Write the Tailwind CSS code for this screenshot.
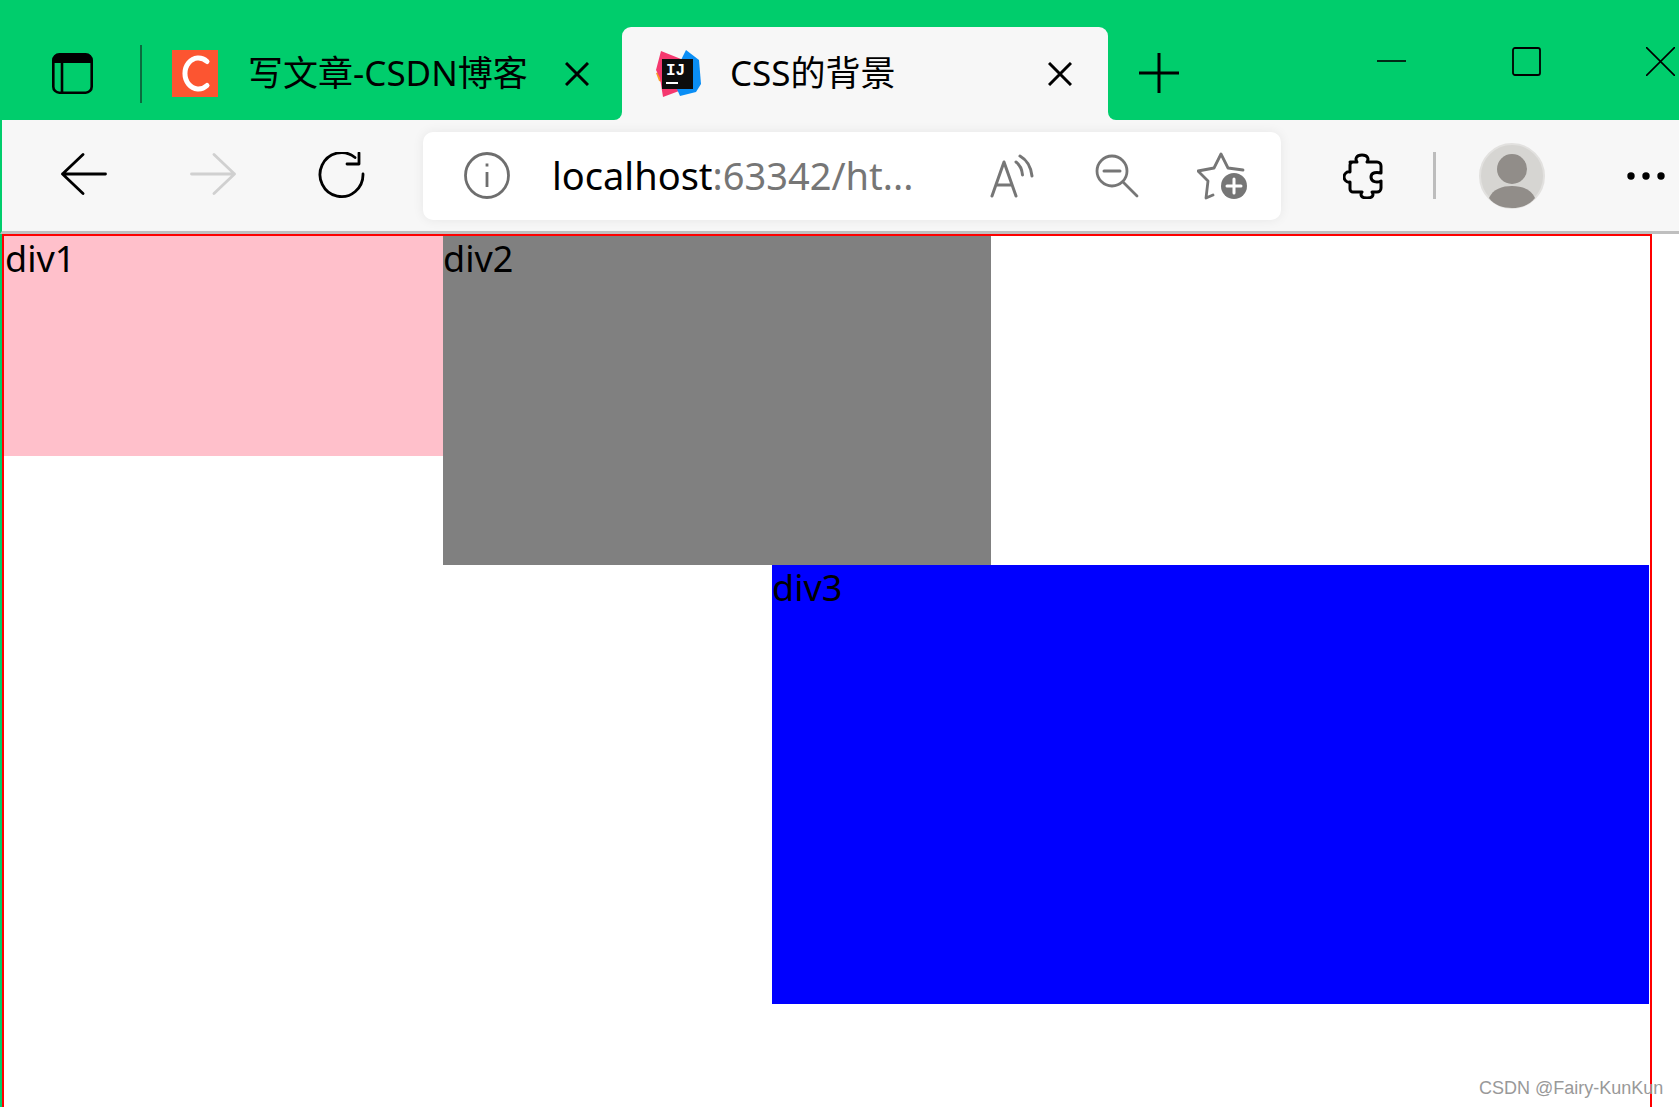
<!DOCTYPE html>
<html lang="en">
<head>
  <meta charset="UTF-8">
  <title>CSS的背景</title>
  <script src="https://cdn.jsdelivr.net/npm/@tailwindcss/browser@4"></script>
</head>
<body class="relative w-[1679px] h-[1107px] overflow-hidden bg-white text-black font-['Noto_Sans','Noto_Sans_CJK_SC',sans-serif]">

  <!-- tab strip -->
  <div class="flex items-center h-[120px] pt-[25px] bg-[#00cd6c]">
    <svg class="ml-[52px] mt-[2px] w-[41px] h-[41px]" viewBox="0 0 41 41" fill="none" stroke="#000" stroke-width="2.6">
      <rect x="1.3" y="1.3" width="38.4" height="38.4" rx="6"/>
      <path d="M1 9V7a6 6 0 0 1 6-6h27a6 6 0 0 1 6 6v3H1z" fill="#000" stroke="none"/>
      <path d="M10 10v30"/>
    </svg>
    <div class="ml-[47px] mt-[2px] w-[2px] h-[58px] bg-[#0b6b3e]"></div>
    <svg class="ml-[30px] mt-[2px] w-[46px] h-[47px]" viewBox="0 0 46 47">
      <rect width="46" height="47" fill="#fc5531"/>
      <path d="M35 11.500a13.500 15.500 0 1 0 0 24" fill="none" stroke="#fff" stroke-width="5" stroke-linecap="round"/>
    </svg>
    <div class="ml-[30px] w-[281px] text-[35px] leading-[48px] whitespace-nowrap">写文章-CSDN博客</div>
    <svg class="ml-[36px] mt-[2px] w-[24px] h-[24px]" viewBox="0 0 24 24" stroke="#000" stroke-width="3"><path d="M1 1l22 22M23 1L1 23"/></svg>

    <!-- active tab -->
    <div class="relative ml-[33px] self-end flex items-center w-[486px] h-[93px] pb-[2px] rounded-t-[9px] bg-[#f7f7f7]">
      <div class="absolute -left-[8px] bottom-0 w-[8px] h-[8px] bg-[#f7f7f7]"><div class="w-full h-full rounded-br-[8px] bg-[#00cd6c]"></div></div>
      <div class="absolute -right-[8px] bottom-0 w-[8px] h-[8px] bg-[#f7f7f7]"><div class="w-full h-full rounded-bl-[8px] bg-[#00cd6c]"></div></div>
      <svg class="ml-[33px] mt-[2px] w-[46px] h-[47px]" viewBox="0 0 46 47">
        <path d="M1 23l8-3 4 14-9-3z" fill="#fb9a28"/>
        <path d="M6 1l20 8-2 32L8 47 5 28 1 20z" fill="#f5386f"/>
        <path d="M31 0l13 10 2 24-5 8-16 4-8-18z" fill="#0a8ef5"/>
        <rect x="7" y="9" width="31" height="30" fill="#0d0d0d"/>
        <text x="11" y="25" font-family="Liberation Mono" font-weight="700" font-size="16" fill="#fff">IJ</text>
        <rect x="11" y="32" width="12" height="2" fill="#fff"/>
      </svg>
      <div class="ml-[29px] w-[164px] text-[35px] leading-[48px] whitespace-nowrap">CSS的背景</div>
      <svg class="ml-[154px] mt-[2px] w-[24px] h-[24px]" viewBox="0 0 24 24" stroke="#000" stroke-width="3"><path d="M1 1l22 22M23 1L1 23"/></svg>
    </div>

    <svg class="ml-[31px] w-[40px] h-[40px]" viewBox="0 0 40 40" stroke="#000" stroke-width="3"><path d="M0 20h40M20 0v40"/></svg>

    <!-- window controls -->
    <div class="flex self-start mt-[22px] h-[29px]">
      <svg class="ml-[198px] w-[29px] h-[29px]" viewBox="0 0 29 29" stroke="#000" stroke-width="1.6"><path d="M0 14h29"/></svg>
      <svg class="ml-[106px] w-[29px] h-[29px]" viewBox="0 0 29 29" fill="none" stroke="#000" stroke-width="1.8"><rect x="1" y="1" width="27" height="27" rx="2"/></svg>
      <svg class="ml-[105px] w-[29px] h-[29px]" viewBox="0 0 29 29" stroke="#000" stroke-width="1.6"><path d="M0 0l29 29M29 0L0 29"/></svg>
    </div>
  </div>

  <!-- toolbar -->
  <div class="flex items-center h-[114px] border-l-2 border-l-[#00cd6c] border-b-[3px] border-b-[#bfbfbf] bg-[#f7f7f7]">
    <svg class="ml-[59px] mb-[4px] w-[46px] h-[42px]" viewBox="0 0 46 42" fill="none" stroke="#000" stroke-width="2.8" stroke-linecap="round" stroke-linejoin="round"><path d="M22 1.500L1.500 21 22 40.500M1.500 21h43"/></svg>
    <svg class="ml-[83px] mb-[4px] w-[46px] h-[42px]" viewBox="0 0 46 42" fill="none" stroke="#d0d0d0" stroke-width="2.8" stroke-linecap="round" stroke-linejoin="round"><path d="M24 1.500L44.500 21 24 40.500M44.500 21h-43"/></svg>
    <svg class="ml-[82px] w-[47px] h-[47px]" viewBox="0 0 47 47" fill="none" stroke="#000" stroke-width="2.8" stroke-linecap="round" stroke-linejoin="round"><path d="M45 22a21.500 22 0 1 1-8-16.500M41 1v11H29"/></svg>

    <!-- address bar -->
    <div class="flex items-center ml-[58px] w-[858px] h-[88px] rounded-[10px] bg-white shadow-[0_0_12px_rgba(0,0,0,0.07)]">
      <svg class="ml-[41px] w-[46px] h-[47px]" viewBox="0 0 46 47" fill="none" stroke="#6e6e6e" stroke-width="2.8"><ellipse cx="23" cy="23.500" rx="21.500" ry="22"/><path d="M23 20v15M23 11.500v3"/></svg>
      <div class="ml-[42px] mb-[2px] w-[363px] text-[38px] leading-[50px] whitespace-nowrap">localhost<span class="text-[#767676]">:63342/ht...</span></div>
      <svg class="ml-[75px] w-[44px] h-[44px]" viewBox="0 0 44 44" fill="none" stroke="#767676" stroke-width="3" stroke-linecap="round" stroke-linejoin="round"><path d="M2 42L14 8l12 34M6 31h16M26 8c4 3 6 7 6.500 13M30 2c7 4 11 11 12 20"/></svg>
      <svg class="ml-[61px] w-[44px] h-[44px]" viewBox="0 0 44 44" fill="none" stroke="#767676" stroke-width="2.8" stroke-linecap="round"><circle cx="17" cy="17" r="15"/><path d="M28 28l14 14"/><path d="M9 17h16" stroke-width="3"/></svg>
      <svg class="ml-[58px] w-[52px] h-[50px]" viewBox="0 0 52 50" fill="none" stroke="#767676" stroke-width="2.8" stroke-linecap="round" stroke-linejoin="round">
        <path d="M16 44l-7 3 2-17-10-10 16-3 7-14 7 14 15 2"/>
        <circle cx="37" cy="35" r="13" fill="#767676" stroke="none"/>
        <path d="M37 28v14M30 35h14" stroke="#fff" stroke-width="3"/>
      </svg>
    </div>

    <svg class="ml-[62px] w-[40px] h-[46px]" viewBox="0 0 40 46" fill="none" stroke="#000" stroke-width="3" stroke-linejoin="round"><path d="M7 9h7c-2-3-1-7 5-7s7 4 5 7h10a4 4 0 0 1 4 4v7c-4-1-10-1-10 4s6 6 10 4v7a4 4 0 0 1-4 4h-5c2 3 1 6-5 6s-7-3-5-6h-9a3 3 0 0 1-3-3v-7c-4 1-6-3-6-5s2-6 6-5v-7a3 3 0 0 1 3-3z"/></svg>
    <div class="ml-[50px] w-[3px] h-[47px] bg-[#bdbdbd]"></div>
    <svg class="ml-[43px] w-[66px] h-[66px]" viewBox="0 0 66 66">
      <circle cx="33" cy="33" r="32" fill="#d6d5d2" stroke="#e2e1df" stroke-width="2"/>
      <circle cx="33" cy="26" r="15" fill="#918d89"/>
      <path d="M10 55c4-9 13-12 23-12s19 3 23 12c-5 7-14 10-23 10s-18-3-23-10z" fill="#918d89"/>
    </svg>
    <svg class="ml-[82px] w-[38px] h-[8px]" viewBox="0 0 38 8" fill="#000"><circle cx="4" cy="4" r="3.700"/><circle cx="19" cy="4" r="3.700"/><circle cx="34" cy="4" r="3.700"/></svg>
  </div>

  <!-- page content, the red box runs past the bottom of the window -->
  <div class="border-l-2 border-l-[#00cd6c]">
    <div class="w-[1650px] h-[880px] border-2 border-[#ff0000] text-[36px] leading-[46px]">
      <div class="flex">
        <div class="w-[439px] h-[220px] pl-[1px] bg-[#ffc0cb]">div1</div>
        <div class="w-[548px] h-[329px] bg-[#808080]">div2</div>
      </div>
      <div class="ml-[768px] w-[877px] h-[439px] bg-[#0000ff]">div3</div>
    </div>
  </div>

  <div class="absolute left-[1479px] top-[1077px] text-[18px] leading-[22px] text-[#999999] whitespace-nowrap font-['Liberation_Sans',sans-serif]">CSDN @Fairy-KunKun</div>
</body>
</html>
